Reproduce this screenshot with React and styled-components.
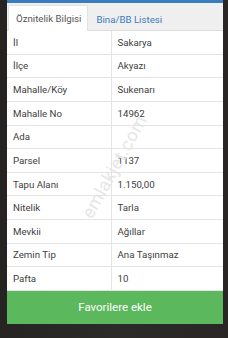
import React from "react";
import styled, { createGlobalStyle } from "styled-components";

const rows = [
  ["İl", "Sakarya"],
  ["İlçe", "Akyazı"],
  ["Mahalle/Köy", "Sukenarı"],
  ["Mahalle No", "14962"],
  ["Ada", ""],
  ["Parsel", "1137"],
  ["Tapu Alanı", "1.150,00"],
  ["Nitelik", "Tarla"],
  ["Mevkii", "Ağıllar"],
  ["Zemin Tip", "Ana Taşınmaz"],
  ["Pafta", "10"],
];

const GlobalStyle = createGlobalStyle`
  body {
    margin: 0;
    background: #2a2727;
    font-family: Roboto, "Noto Sans", sans-serif;
  }
`;

const Page = styled.div`
  height: 338px;
  padding: 0 5px 0 7px;
  box-sizing: border-box;
  background: linear-gradient(90deg, #262323 0%, #2d2a2a 50%, #2a2626 100%);
`;

const Card = styled.div`
  border-top: 3px solid #3b7cbd;
  background: #fff;
`;

const Tabs = styled.div`
  display: flex;
  height: 28px;
  background: #efefef;
  border-bottom: 1px solid #dcdcdc;
  box-sizing: border-box;
  padding-left: 1px;
  align-items: flex-end;
`;

const Tab = styled.div`
  height: ${(p) => (p.active ? "26px" : "25px")};
  display: flex;
  align-items: center;
  padding: 0 6px 0 7px;
  font-size: 9.7px;
  color: ${(p) => (p.active ? "#555" : "#3b7cbd")};
  background: ${(p) => (p.active ? "#fff" : "transparent")};
  border: 1px solid ${(p) => (p.active ? "#e2e2e2" : "transparent")};
  border-bottom: none;
  margin-bottom: -1px;
  box-sizing: border-box;
`;

const Table = styled.div`
  position: relative;
  overflow: hidden;
`;

const Row = styled.div`
  display: grid;
  grid-template-columns: 103.5px 1fr;
  height: 23.64px;
  border-bottom: 1px solid #e4e4e4;
  box-sizing: border-box;
  font-size: 9.7px;
  color: #404040;
  &:last-child {
    border-bottom: none;
  }
`;

const Cell = styled.div`
  display: flex;
  align-items: center;
  padding-left: 6px;
  & + & {
    border-left: 1px solid #e4e4e4;
  }
`;

const Watermark = styled.div`
  position: absolute;
  left: 42px;
  top: 125px;
  width: 130px;
  text-align: center;
  font-size: 18px;
  color: #e6e6e6;
  transform: rotate(-61deg);
  pointer-events: none;
  letter-spacing: 0.5px;
`;

const Button = styled.div`
  height: 33px;
  display: flex;
  align-items: center;
  justify-content: center;
  background: #5cb85c;
  color: #fff;
  font-size: 11.5px;
`;

export default function App() {
  return (
    <>
      <GlobalStyle />
      <Page>
        <Card>
          <Tabs>
            <Tab active>Öznitelik Bilgisi</Tab>
            <Tab>Bina/BB Listesi</Tab>
          </Tabs>
          <Table>
            {rows.map(([k, v]) => (
              <Row key={k}>
                <Cell>{k}</Cell>
                <Cell>{v}</Cell>
              </Row>
            ))}
            <Watermark>emlakjet.com</Watermark>
          </Table>
          <Button>Favorilere ekle</Button>
        </Card>
      </Page>
    </>
  );
}
